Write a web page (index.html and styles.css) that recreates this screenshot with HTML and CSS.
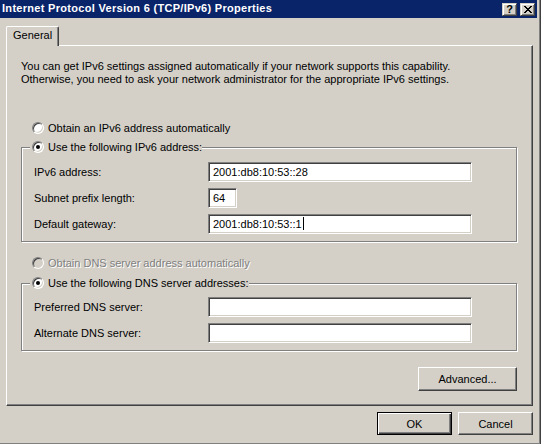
FILE: index.html
```html
<!DOCTYPE html>
<html>
<head>
<meta charset="utf-8">
<title>Internet Protocol Version 6 (TCP/IPv6) Properties</title>
<link rel="stylesheet" href="styles.css">
</head>
<body>
<div class="window">
  <div class="titlebar">
    <span class="title">Internet Protocol Version 6 (TCP/IPv6) Properties</span>
    <div class="caption-buttons">
      <div class="cap-btn help">?</div>
      <div class="cap-btn close">
        <svg width="8" height="7" viewBox="0 0 8 7" shape-rendering="crispEdges"><path fill="#000" d="M0 0h2v1H0zM6 0h2v1H6zM1 1h2v1H1zM5 1h2v1H5zM2 2h4v1H2zM3 3h2v1H3zM2 4h4v1H2zM1 5h2v1H1zM5 5h2v1H5zM0 6h2v1H0zM6 6h2v1H6z"/></svg>
      </div>
    </div>
  </div>
  <div class="client">
    <div class="tabs"><div class="tab">General</div></div>
    <div class="panel">
      <p class="intro">You can get IPv6 settings assigned automatically if your network supports this capability.<br>Otherwise, you need to ask your network administrator for the appropriate IPv6 settings.</p>
      <div class="radio-row auto-ip"><span class="radio"></span><span>Obtain an IPv6 address automatically</span></div>
      <div class="group g1">
        <div class="legend"><span class="radio checked"></span><span>Use the following IPv6 address:</span></div>
        <div class="fields">
          <div class="field"><span class="label">IPv6 address:</span><div class="textbox wide">2001:db8:10:53::28</div></div>
          <div class="field"><span class="label">Subnet prefix length:</span><div class="textbox short">64</div></div>
          <div class="field"><span class="label">Default gateway:</span><div class="textbox wide">2001:db8:10:53::1<span class="caret"></span></div></div>
        </div>
      </div>
      <div class="radio-row auto-dns"><span class="radio disabled"></span><span class="disabled-text">Obtain DNS server address automatically</span></div>
      <div class="group g2">
        <div class="legend"><span class="radio checked"></span><span>Use the following DNS server addresses:</span></div>
        <div class="fields">
          <div class="field"><span class="label">Preferred DNS server:</span><div class="textbox wide"></div></div>
          <div class="field"><span class="label">Alternate DNS server:</span><div class="textbox wide"></div></div>
        </div>
      </div>
      <div class="adv-row"><div class="button adv">Advanced...</div></div>
    </div>
    <div class="dialog-buttons">
      <div class="button default">OK</div>
      <div class="button">Cancel</div>
    </div>
  </div>
</div>
</body>
</html>
```
FILE: styles.css
```css
* { box-sizing: border-box; }
html, body { margin: 0; padding: 0; }
body {
  width: 541px;
  height: 444px;
  overflow: hidden;
  background: #D4D0C8;
  font-family: "Liberation Sans", Arial, sans-serif;
  font-size: 11px;
  color: #000;
}
.window {
  width: 541px;
  height: 444px;
  background: #D4D0C8;
  padding-right: 4px;
  box-shadow: inset -1px 0 #404040, inset -2px 0 #808080, inset 0 -1px #808080;
}
.titlebar {
  display: flex;
  height: 18px;
  background: #0A246A;
  color: #fff;
}
.title {
  font-weight: bold;
  line-height: 17px;
  padding-left: 2px;
  letter-spacing: 0.3px;
  white-space: nowrap;
}
.caption-buttons {
  margin-left: auto;
  display: flex;
  gap: 3px;
  padding-top: 3px;
  padding-right: 2px;
}
.cap-btn {
  width: 15px;
  height: 13px;
  background: #D4D0C8;
  border: 1px solid;
  border-color: #D4D0C8 #404040 #404040 #D4D0C8;
  box-shadow: inset 1px 1px #fff, inset -1px -1px #808080;
  display: flex;
  align-items: center;
  justify-content: center;
  color: #000;
  font-weight: bold;
  font-size: 11px;
  line-height: 11px;
}
.client { padding: 8px 0 0 6px; }
.tabs { height: 19px; display: flex; }
.tab {
  position: relative;
  z-index: 1;
  width: 53px;
  height: 20px;
  background: #D4D0C8;
  border-top: 1px solid #fff;
  border-left: 1px solid #fff;
  border-right: 1px solid #404040;
  box-shadow: inset -1px 0 #808080;
  border-radius: 2px 2px 0 0;
  padding-left: 6px;
  line-height: 17px;
}
.panel {
  width: 527px;
  height: 361px;
  border: 1px solid;
  border-color: #fff #404040 #404040 #fff;
  box-shadow: inset -1px -1px #808080;
  padding-top: 14px;
}
.intro {
  margin: 0 0 0 14px;
  line-height: 13px;
  white-space: nowrap;
}
.radio-row {
  display: flex;
  align-items: center;
  gap: 4px;
  height: 12px;
  margin-left: 25px;
  line-height: 12px;
  white-space: nowrap;
}
.auto-ip { margin-top: 36px; }
.auto-dns { margin-top: 15px; }
.radio {
  position: relative;
  flex: none;
  width: 12px;
  height: 12px;
  border-radius: 50%;
  background: #fff;
  border: 1px solid;
  border-color: #808080 #fff #fff #808080;
  box-shadow: inset 1px 1px #404040, inset -1px -1px #D4D0C8;
}
.radio.checked::after {
  content: "";
  position: absolute;
  left: 3px;
  top: 3px;
  width: 4px;
  height: 4px;
  border-radius: 50%;
  background: #000;
}
.radio.disabled { background: #D4D0C8; }
.disabled-text { color: #808080; text-shadow: 1px 1px 0 #fff; }
.group {
  position: relative;
  width: 496px;
  margin-left: 14px;
  border: 1px solid #808080;
  box-shadow: inset 1px 1px #fff, 1px 1px #fff;
}
.g1 { margin-top: 13px; padding: 14px 0 7px 12px; }
.g2 { margin-top: 14px; padding: 13px 0 7px 12px; }
.legend {
  position: absolute;
  top: -7px;
  left: 8px;
  display: flex;
  align-items: center;
  gap: 4px;
  height: 12px;
  padding-left: 2px;
  background: #D4D0C8;
  line-height: 12px;
  white-space: nowrap;
}
.fields { display: flex; flex-direction: column; gap: 6px; }
.field { display: flex; align-items: center; height: 20px; }
.label { width: 174px; white-space: nowrap; }
.textbox {
  height: 20px;
  background: #fff;
  border: 1px solid;
  border-color: #808080 #fff #fff #808080;
  box-shadow: inset 1px 1px #404040, inset -1px -1px #D4D0C8;
  padding-left: 4px;
  line-height: 18px;
  white-space: nowrap;
}
.wide { width: 264px; }
.short { width: 29px; }
.caret {
  display: inline-block;
  width: 1px;
  height: 13px;
  background: #000;
  vertical-align: -2px;
  margin-left: 1px;
}
.adv-row {
  width: 496px;
  margin-left: 14px;
  margin-top: 16px;
  display: flex;
  justify-content: flex-end;
}
.button {
  height: 23px;
  background: #D4D0C8;
  border: 1px solid;
  border-color: #fff #404040 #404040 #fff;
  box-shadow: inset -1px -1px #808080;
  display: flex;
  align-items: center;
  justify-content: center;
  white-space: nowrap;
}
.adv { width: 99px; height: 24px; }
.dialog-buttons {
  width: 527px;
  display: flex;
  justify-content: flex-end;
  gap: 6px;
  margin-top: 6px;
}
.dialog-buttons .button { width: 75px; }
.button.default {
  border-color: #000;
  box-shadow: inset 1px 1px #fff, inset -1px -1px #404040, inset -2px -2px #808080;
}
```
